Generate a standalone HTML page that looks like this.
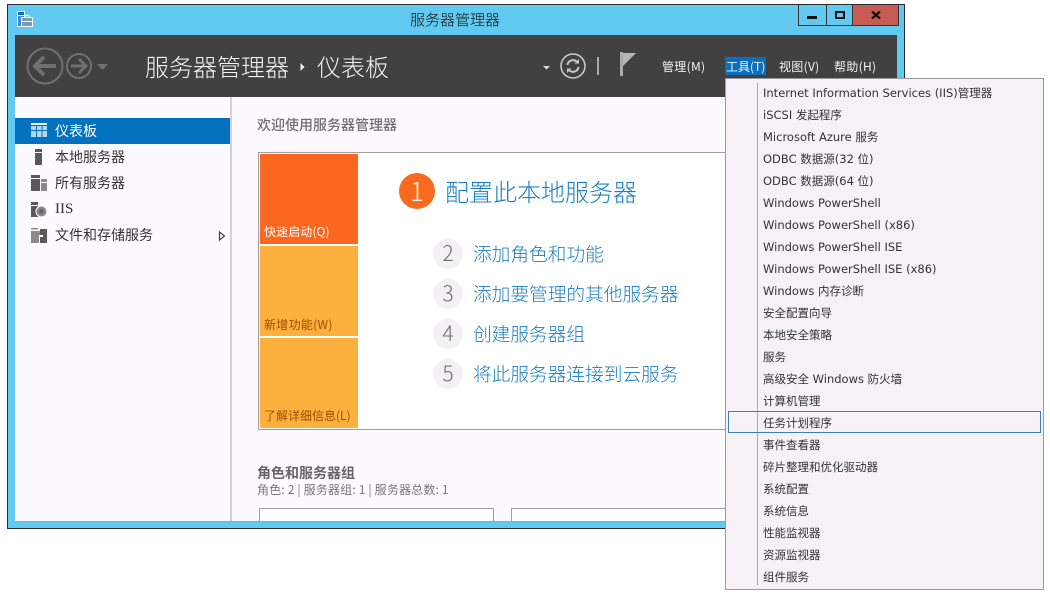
<!DOCTYPE html>
<html lang="zh-CN"><head><meta charset="utf-8"><title>服务器管理器</title>
<style>
html,body{margin:0;padding:0;width:1050px;height:595px;overflow:hidden;background:#fff}
body{position:relative;font-family:"Liberation Sans","Noto Sans CJK SC",sans-serif}
div,span,svg{position:absolute;white-space:nowrap;box-sizing:border-box}
.zh{font-family:"Noto Sans CJK SC","Liberation Sans",sans-serif}
.m{left:763px;line-height:22px;height:22px;color:#333;font-family:"DejaVu Sans","Noto Sans CJK SC",sans-serif;font-size:11.5px}
.s{left:55px;font-size:14px;line-height:26px;color:#333;font-family:"Noto Sans CJK SC",sans-serif}
.n{left:433px;width:30px;height:30px;border-radius:50%;background:#f4f1f5;color:#6e6e6e;font-size:21px;line-height:29px;text-align:center;font-weight:300;font-family:"Noto Sans CJK SC",sans-serif}
.l{left:473px;font-size:18.7px;line-height:28px;color:#1a7fc4;font-weight:300;font-family:"Noto Sans CJK SC",sans-serif}
.t{left:264px;font-size:12px;line-height:16px;letter-spacing:.1px;font-family:"Noto Sans CJK SC",sans-serif}
.h{font-size:12px;line-height:16px;color:#f2f2f2;top:59px;letter-spacing:.3px;font-family:"Noto Sans CJK SC",sans-serif}
</style></head><body>
<div style="left:7px;top:4px;width:898px;height:525px;background:#62caf0;border:1px solid #2b2b2b"></div>
<svg style="left:16px;top:10px" width="18" height="18" viewBox="0 0 18 18"><rect x="1" y="1" width="8" height="16" fill="#fff"/><rect x="2" y="2" width="6" height="3" fill="#0f6fc6"/><rect x="2" y="6" width="6" height="10" fill="#3a8fdc"/><rect x="5" y="7" width="12" height="10" fill="#fff"/><rect x="6" y="8" width="10" height="8" fill="#7c9bb0"/><rect x="6" y="11" width="10" height="1" fill="#fff"/><rect x="9" y="5.500" width="4" height="2" fill="none" stroke="#fff"/></svg>
<div class="zh" style="left:410px;top:10px;font-size:15px;line-height:20px;color:#111;font-weight:300">服务器管理器</div>
<div style="left:798px;top:4px;width:101px;height:22px;border:1px solid #333;border-top:0"></div>
<div style="left:826px;top:4px;width:1px;height:21px;background:#333"></div>
<div style="left:852px;top:4px;width:1px;height:21px;background:#333"></div>
<div style="left:853px;top:5px;width:45px;height:20px;background:#c75a52"></div>
<div style="left:807px;top:16px;width:10px;height:3px;background:#111"></div>
<div style="left:835px;top:11px;width:10px;height:8px;border:2px solid #111"></div>
<svg style="left:871px;top:11px" width="10" height="8" viewBox="0 0 10 8"><path d="M1 0.500L9 7.500M9 0.500L1 7.500" stroke="#111" stroke-width="2.200"/></svg>

<div style="left:15px;top:35px;width:882px;height:62px;background:#414141"></div>
<div style="left:15px;top:97px;width:882px;height:424px;background:#fdfaff"></div>
<svg style="left:24px;top:44px" width="90" height="44" viewBox="0 0 90 44">
<circle cx="21" cy="22" r="17.500" fill="none" stroke="#707070" stroke-width="2"/>
<path d="M11 22H32M20 13L11 22L20 31" fill="none" stroke="#707070" stroke-width="4"/>
<circle cx="55" cy="22" r="12" fill="none" stroke="#707070" stroke-width="2"/>
<path d="M47 22H62M55 15L62 22L55 29" fill="none" stroke="#707070" stroke-width="3"/>
<path d="M73 20H84L78.500 26Z" fill="#707070"/></svg>
<div class="zh" style="left:145px;top:48px;font-size:24px;line-height:36px;color:#f2f2f2;font-weight:300">服务器管理器</div>
<svg style="left:299px;top:60px" width="8" height="14" viewBox="0 0 8 14"><path d="M1.500 3L5.500 7L1.500 11Z" fill="#f2f2f2"/></svg>
<div class="zh" style="left:317px;top:48px;font-size:24px;line-height:36px;color:#f2f2f2;font-weight:300">仪表板</div>
<svg style="left:540px;top:50px" width="120" height="30" viewBox="0 0 120 30">
<path d="M3 16H10L6.500 19.500Z" fill="#ddd"/>
<circle cx="33" cy="16" r="12" fill="none" stroke="#c8c8c8" stroke-width="1.600"/>
<path d="M27.500 15a5.500 5.500 0 0 1 9.500-3M38.500 17a5.500 5.500 0 0 1-9.500 3" fill="none" stroke="#c8c8c8" stroke-width="2"/>
<path d="M34.500 13.500h4.500v-4.500zM31.500 18.500h-4.500v4.500z" fill="#c8c8c8"/>
<rect x="57" y="7" width="2" height="18" fill="#aaa"/>
<rect x="80" y="2" width="3" height="24" fill="#aaa"/>
<path d="M83 3H96L83 16Z" fill="#b5b5b5"/></svg>
<div class="h" style="left:662px">管理(M)</div>
<div style="left:725px;top:57px;width:41px;height:18px;background:#0a6fbd"></div>
<div class="h" style="left:726px;letter-spacing:0">工具(T)</div>
<div class="h" style="left:779px">视图(V)</div>
<div class="h" style="left:834px">帮助(H)</div>

<div style="left:230px;top:97px;width:2px;height:424px;background:#d2d2d2"></div>
<div style="left:15px;top:118px;width:215px;height:26px;background:#0272bf"></div>
<svg style="left:31px;top:122px" width="16" height="16" viewBox="0 0 16 16"><path d="M0 1H16V3H0Z" fill="#e8f2fa"/><path d="M0 4H5V8H0ZM6 4H10.500V8H6ZM11.500 4H16V8H11.500ZM0 9H5V15H0ZM6 9H10.500V15H6ZM11.500 9H16V15H11.500Z" fill="#b6d6ee"/></svg>
<svg style="left:31px;top:148px" width="16" height="18" viewBox="0 0 16 18"><rect x="4" y="1" width="7" height="3" fill="#595959"/><rect x="4" y="5" width="7" height="12" fill="#595959"/></svg>
<svg style="left:31px;top:174px" width="17" height="18" viewBox="0 0 17 18"><rect x="0" y="1" width="9" height="3" fill="#595959"/><rect x="0" y="5" width="9" height="12" fill="#595959"/><rect x="10" y="5" width="6" height="3" fill="#8a8a8a"/><rect x="10" y="9" width="6" height="8" fill="#8a8a8a"/></svg>
<svg style="left:31px;top:200px" width="17" height="18" viewBox="0 0 17 18"><rect x="0" y="2" width="7" height="3" fill="#595959"/><rect x="0" y="6" width="7" height="11" fill="#595959"/><circle cx="10.500" cy="11.500" r="6" fill="#fdfaff"/><circle cx="10.500" cy="11.500" r="5" fill="#888"/><circle cx="10.500" cy="11.500" r="2.500" fill="#666"/></svg>
<svg style="left:31px;top:226px" width="17" height="18" viewBox="0 0 17 18"><path d="M0 2H7V3.500H0ZM0 5H13V17H0Z" fill="#8a8a8a"/><path d="M9 3H16V17H9V13H11V9H9Z" fill="#595959"/><rect x="8" y="9" width="4" height="8" fill="#fdfaff"/><rect x="9" y="11" width="6" height="6" fill="#595959"/></svg>
<div class="s" style="top:118px;color:#fff">仪表板</div>
<div class="s" style="top:144px">本地服务器</div>
<div class="s" style="top:170px">所有服务器</div>
<div class="s" style="top:196px;font-size:15px;font-family:'Liberation Serif',serif">IIS</div>
<div class="s" style="top:222px">文件和存储服务</div>
<svg style="left:218px;top:231px" width="9" height="10" viewBox="0 0 9 10"><path d="M1.500 1L6.500 5L1.500 9Z" fill="none" stroke="#444" stroke-width="1.200"/></svg>

<div class="zh" style="left:257px;top:116px;font-size:14px;line-height:18px;color:#6e6e6e;font-weight:500">欢迎使用服务器管理器</div>
<div style="left:258px;top:152px;width:480px;height:278px;background:#fff;border:1px solid #a0a0a0"></div>
<div style="left:260px;top:154px;width:98px;height:90px;background:#fc6720"></div>
<div style="left:260px;top:246px;width:98px;height:90px;background:#feb03f"></div>
<div style="left:260px;top:338px;width:98px;height:90px;background:#feb03f"></div>
<div class="t" style="top:224px;color:#fff">快速启动(Q)</div>
<div class="t" style="top:317px;color:#a34b00;letter-spacing:.3px">新增功能(W)</div>
<div class="t" style="top:408px;color:#a34b00;letter-spacing:0">了解详细信息(L)</div>
<div style="left:399px;top:173px;width:36px;height:36px;border-radius:50%;background:#f96a1e;color:#fff;font-size:26px;line-height:35px;text-align:center;font-weight:300;font-family:'Noto Sans CJK SC',sans-serif">1</div>
<div class="zh" style="left:445px;top:174px;font-size:24px;line-height:34px;color:#1a7fc4;font-weight:300">配置此本地服务器</div>
<div class="n" style="top:239px">2</div><div class="l" style="top:240px">添加角色和功能</div>
<div class="n" style="top:279px">3</div><div class="l" style="top:280px">添加要管理的其他服务器</div>
<div class="n" style="top:319px">4</div><div class="l" style="top:320px">创建服务器组</div>
<div class="n" style="top:359px">5</div><div class="l" style="top:360px">将此服务器连接到云服务</div>
<div class="zh" style="left:257px;top:465px;font-size:14px;line-height:17px;color:#666;font-weight:700">角色和服务器组</div>
<div class="zh" style="left:257px;top:481px;font-size:12px;line-height:17px;color:#777;letter-spacing:.17px">角色: 2 | 服务器组: 1 | 服务器总数: 1</div>
<div style="left:259px;top:508px;width:235px;height:13px;background:#fff;border:1px solid #a0a0a0;border-bottom:0"></div>
<div style="left:511px;top:508px;width:240px;height:13px;background:#fff;border:1px solid #a0a0a0;border-bottom:0"></div>
<div style="left:15px;top:521px;width:882px;height:1px;background:#a0a0a0"></div>

<div style="left:725px;top:78px;width:319px;height:512px;background:#f5f1f5;border:1px solid #9a9a9a"></div>
<div style="left:757px;top:83px;width:1px;height:502px;background:#a8a8a8"></div>
<div style="left:728px;top:411px;width:313px;height:22px;border:1px solid #3a80b8"></div>
<div class="m" style="top:82px">Internet Information Services (IIS)管理器</div>
<div class="m" style="top:104px">iSCSI 发起程序</div>
<div class="m" style="top:126px">Microsoft Azure 服务</div>
<div class="m" style="top:148px">ODBC 数据源(32 位)</div>
<div class="m" style="top:170px">ODBC 数据源(64 位)</div>
<div class="m" style="top:192px">Windows PowerShell</div>
<div class="m" style="top:214px">Windows PowerShell (x86)</div>
<div class="m" style="top:236px">Windows PowerShell ISE</div>
<div class="m" style="top:258px">Windows PowerShell ISE (x86)</div>
<div class="m" style="top:280px">Windows 内存诊断</div>
<div class="m" style="top:302px">安全配置向导</div>
<div class="m" style="top:324px">本地安全策略</div>
<div class="m" style="top:346px">服务</div>
<div class="m" style="top:368px">高级安全 Windows 防火墙</div>
<div class="m" style="top:390px">计算机管理</div>
<div class="m" style="top:412px">任务计划程序</div>
<div class="m" style="top:434px">事件查看器</div>
<div class="m" style="top:456px">碎片整理和优化驱动器</div>
<div class="m" style="top:478px">系统配置</div>
<div class="m" style="top:500px">系统信息</div>
<div class="m" style="top:522px">性能监视器</div>
<div class="m" style="top:544px">资源监视器</div>
<div class="m" style="top:566px">组件服务</div>
</body></html>
